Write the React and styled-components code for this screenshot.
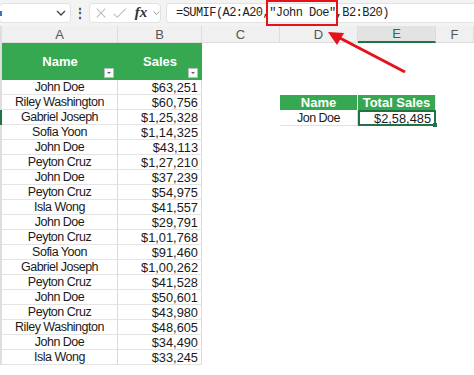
import styled, { createGlobalStyle } from 'styled-components';

const GlobalStyle = createGlobalStyle`
  html, body {
    margin: 0;
    padding: 0;
    background: #fff;
    font-family: "Liberation Sans", Arial, sans-serif;
  }
`;

const rows = [
  ['John Doe', '$63,251'],
  ['Riley Washington', '$60,756'],
  ['Gabriel Joseph', '$1,25,328'],
  ['Sofia Yoon', '$1,14,325'],
  ['John Doe', '$43,113'],
  ['Peyton Cruz', '$1,27,210'],
  ['John Doe', '$37,239'],
  ['Peyton Cruz', '$54,975'],
  ['Isla Wong', '$41,557'],
  ['John Doe', '$29,791'],
  ['Peyton Cruz', '$1,01,768'],
  ['Sofia Yoon', '$91,460'],
  ['Gabriel Joseph', '$1,00,262'],
  ['Peyton Cruz', '$41,528'],
  ['John Doe', '$50,601'],
  ['Peyton Cruz', '$43,980'],
  ['Riley Washington', '$48,605'],
  ['John Doe', '$34,490'],
  ['Isla Wong', '$33,245'],
];

const Page = styled.div`
  position: relative;
  width: 474px;
  height: 375px;
  overflow: hidden;
  background: #fff;
`;

const FormulaBar = styled.div`
  display: flex;
  align-items: center;
  height: 26px;
  background: #f3f3f3;
  padding: 0 0 1px 0;
  box-sizing: border-box;
`;

const BarBox = styled.div`
  display: flex;
  align-items: center;
  height: 20px;
  background: #fff;
  border: 1px solid #e2e2e2;
  border-radius: 4px;
  box-sizing: border-box;
`;

const NameBox = styled(BarBox)`
  position: relative;
  width: 72px;
  margin-left: -1px;
  justify-content: flex-end;
  padding-right: 4px;

  &::before {
    content: '';
    position: absolute;
    left: 0;
    top: 7px;
    width: 2px;
    height: 5px;
    background: #3a6fc4;
  }
`;

const Dots = styled.div`
  width: 18px;
  display: flex;
  justify-content: center;
  color: #444;
  font-size: 12px;
  font-weight: bold;
  line-height: 1;
`;

const IconBox = styled(BarBox)`
  width: 72px;
  gap: 6px;
  padding-left: 5px;
`;

const Fx = styled.span`
  font-family: "Liberation Serif", serif;
  font-style: italic;
  font-weight: bold;
  font-size: 15px;
  color: #333;
  margin-left: 2px;
`;

const FormulaBox = styled(BarBox)`
  flex: 1;
  margin-left: 5px;
  border-right: none;
  border-radius: 4px 0 0 4px;
  padding-left: 9px;
  font-family: "Liberation Mono", "DejaVu Sans Mono", monospace;
  font-size: 12px;
  letter-spacing: -0.55px;
  color: #222;
  white-space: nowrap;
`;

const Marked = styled.span`
  position: relative;

  &::after {
    content: '';
    position: absolute;
    left: -3px;
    right: -2px;
    top: -6px;
    bottom: -6px;
    border: 2.5px solid #e5121a;
  }
`;

const Sheet = styled.div`
  display: grid;
  grid-template-columns: 2px 116px 84px 78px 78px 78px 1fr;
  grid-auto-rows: 15px;
  grid-template-rows: 17px 37px;
`;

const ColHead = styled.div`
  background: ${p => (p.$active ? '#e3e3e3' : '#f0f0f0')};
  border-right: 1px solid #dcdcdc;
  border-bottom: ${p => (p.$active ? '2px solid #217346' : '1px solid #dcdcdc')};
  color: ${p => (p.$active ? '#217346' : '#555')};
  font-size: 13px;
  display: flex;
  align-items: center;
  justify-content: center;
  box-sizing: border-box;
`;

const RowHead = styled.div`
  background: ${p => (p.$active ? '#217346' : '#dedede')};
`;

const Head = styled.div`
  position: relative;
  background: #36a852;
  color: #fff;
  font-weight: bold;
  font-size: 13px;
  display: flex;
  align-items: center;
  justify-content: center;
  padding-bottom: 1px;
  box-sizing: border-box;
`;

const Filter = styled.span`
  position: absolute;
  right: 4px;
  bottom: 2px;
  width: 10px;
  height: 10px;
  background: #fafafa;
  border: 1px solid #bbb;
  box-sizing: border-box;
  display: flex;
  align-items: center;
  justify-content: center;

  &::after {
    content: '';
    border-left: 2px solid transparent;
    border-right: 2px solid transparent;
    border-top: 2px solid #666;
  }
`;

const Cell = styled.div`
  font-size: ${p => (p.$right ? '12.8px' : '12.5px')};
  letter-spacing: ${p => (p.$right ? '0' : '-0.5px')};
  color: #1a1a1a;
  display: flex;
  align-items: center;
  justify-content: ${p => (p.$right ? 'flex-end' : 'center')};
  padding: 0 ${p => (p.$right ? '3px' : '0')};
  border-right: 1px solid #dadada;
  border-bottom: 1px solid #e4e4e4;
  box-sizing: border-box;
  white-space: nowrap;
`;

const Blank = styled.div``;

const SmallHead = styled.div`
  background: #36a852;
  color: #fff;
  font-weight: bold;
  font-size: 13px;
  display: flex;
  align-items: center;
  justify-content: center;
  border-right: 1px solid #e8f5ec;
`;

const SmallCell = styled(Cell)`
  position: relative;
  height: 16px;
  border-bottom: 1px solid #e0e0e0;
  ${p => p.$selected && `
    border: 2px solid #217346;
    &::after {
      content: '';
      position: absolute;
      right: -3px;
      bottom: -3px;
      width: 4px;
      height: 4px;
      background: #217346;
    }
  `}
`;

const Arrow = styled.svg`
  position: absolute;
  left: 0;
  top: 0;
  pointer-events: none;
`;

const Chevron = () => (
  <svg width="10" height="8" viewBox="0 0 10 8">
    <path d="M1 2l4 4 4-4" fill="none" stroke="#444" strokeWidth="1.3" />
  </svg>
);

const cols = ['A', 'B', 'C', 'D', 'E', 'F'];

export default function App() {
  return (
    <Page>
      <GlobalStyle />
      <FormulaBar>
        <NameBox>
          <Chevron />
        </NameBox>
        <Dots>⋮</Dots>
        <IconBox>
          <svg width="14" height="14" viewBox="0 0 14 14">
            <path d="M2 2l10 10M12 2L2 12" stroke="#bbb" strokeWidth="1.2" />
          </svg>
          <svg width="16" height="14" viewBox="0 0 16 14">
            <path d="M1 8l4 4 10-10" fill="none" stroke="#bbb" strokeWidth="1.2" />
          </svg>
          <Fx>fx</Fx>
          <svg width="8" height="6" viewBox="0 0 10 8">
            <path d="M1 2l4 4 4-4" fill="none" stroke="#888" strokeWidth="1.3" />
          </svg>
        </IconBox>
        <FormulaBox>
          =SUMIF(A2:A20,<Marked>"John Doe"</Marked>,B2:B20)
        </FormulaBox>
      </FormulaBar>

      <Sheet>
        <RowHead />
        {cols.map(c => (
          <ColHead key={c} $active={c === 'E'}>{c}</ColHead>
        ))}

        <RowHead />
        <Head>Name<Filter /></Head>
        <Head>Sales<Filter /></Head>
        <Blank /><Blank /><Blank /><Blank />

        {rows.map(([name, sales], i) => (
          <Row key={i} index={i} name={name} sales={sales} />
        ))}
      </Sheet>

      <Arrow width="474" height="375">
        <line x1="405" y1="72" x2="338" y2="37" stroke="#e5121a" strokeWidth="3" />
        <polygon points="328,32 344,33 337,45" fill="#e5121a" />
      </Arrow>
    </Page>
  );
}

function Row({ index, name, sales }) {
  return (
    <>
      <RowHead $active={index === 2} />
      <Cell>{name}</Cell>
      <Cell $right>{sales}</Cell>
      <Blank />
      {index === 1 && (
        <>
          <SmallHead>Name</SmallHead>
          <SmallHead>Total Sales</SmallHead>
        </>
      )}
      {index === 2 && (
        <>
          <SmallCell>Jon Doe</SmallCell>
          <SmallCell $right $selected>$2,58,485</SmallCell>
        </>
      )}
      {index !== 1 && index !== 2 && (
        <>
          <Blank />
          <Blank />
        </>
      )}
      <Blank />
    </>
  );
}
